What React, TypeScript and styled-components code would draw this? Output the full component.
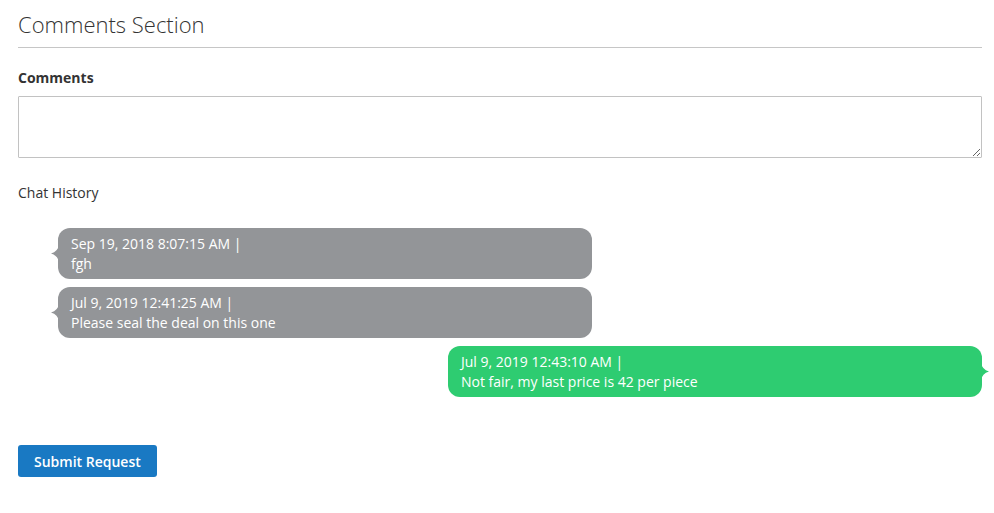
import React from "react";
import styled, { createGlobalStyle, css } from "styled-components";

const GlobalStyle = createGlobalStyle`
  html, body { margin: 0; padding: 0; background: #fff; }
  body { font-family: "Open Sans", "Liberation Sans", sans-serif; color: #333; }
  * { box-sizing: border-box; }
`;

const Page = styled.div`
  width: 994px;
  padding: 0 12px 0 18px;
  display: flex;
  flex-direction: column;
`;

const Title = styled.h2`
  margin: 12px 0 0;
  font-size: 22px;
  font-weight: 300;
  line-height: 24px;
  color: #333;
  padding-bottom: 11px;
  border-bottom: 1px solid #c6c6c6;
`;

const Label = styled.label`
  margin-top: 20px;
  font-size: 14px;
  font-weight: 700;
  line-height: 20px;
  color: #333;
`;

const TextArea = styled.textarea`
  margin-top: 8px;
  width: 100%;
  height: 62px;
  border: 1px solid #c2c2c2;
  border-radius: 1px;
  font-family: inherit;
  font-size: 14px;
  padding: 8px 9px;
  outline: none;
  resize: vertical;
`;

const SectionTitle = styled.div`
  margin-top: 25px;
  font-size: 14px;
  line-height: 20px;
  color: #333;
`;

const ChatList = styled.div`
  margin-top: 25px;
  display: flex;
  flex-direction: column;
  gap: 8px;
`;

const Bubble = styled.div<{ $mine?: boolean }>`
  position: relative;
  width: 534px;
  padding: 6px 13px 5px;
  border-radius: 12px;
  font-size: 14px;
  line-height: 20px;
  color: #fff;
  background: ${(p) => (p.$mine ? "#2ecc71" : "#939598")};
  ${(p) =>
    p.$mine
      ? css`
          align-self: flex-end;
        `
      : css`
          margin-left: 40px;
        `}

  &::before {
    content: "";
    position: absolute;
    top: 50%;
    width: 8px;
    height: 18px;
    margin-top: -9px;
    background: inherit;
    ${(p) =>
      p.$mine
        ? css`
            right: -7px;
            clip-path: path("M0 0 Q1 7 8 9 Q1 11 0 18 Z");
          `
        : css`
            left: -7px;
            clip-path: path("M8 0 Q7 7 0 9 Q7 11 8 18 Z");
          `}
  }
`;

const Line = styled.div``;

const SubmitButton = styled.button`
  margin-top: 48px;
  align-self: flex-start;
  height: 32px;
  padding: 0 16px;
  border: none;
  border-radius: 3px;
  background: #1979c3;
  color: #fff;
  font-family: inherit;
  font-size: 14px;
  font-weight: 600;
  cursor: pointer;
`;

const messages = [
  { time: "Sep 19, 2018 8:07:15 AM |", text: "fgh", mine: false },
  { time: "Jul 9, 2019 12:41:25 AM |", text: "Please seal the deal on this one", mine: false },
  { time: "Jul 9, 2019 12:43:10 AM |", text: "Not fair, my last price is 42 per piece", mine: true },
];

export default function App() {
  return (
    <>
      <GlobalStyle />
      <Page>
        <Title>Comments Section</Title>
        <Label>Comments</Label>
        <TextArea />
        <SectionTitle>Chat History</SectionTitle>
        <ChatList>
          {messages.map((m, i) => (
            <Bubble key={i} $mine={m.mine}>
              <Line>{m.time}</Line>
              <Line>{m.text}</Line>
            </Bubble>
          ))}
        </ChatList>
        <SubmitButton>Submit Request</SubmitButton>
      </Page>
    </>
  );
}
